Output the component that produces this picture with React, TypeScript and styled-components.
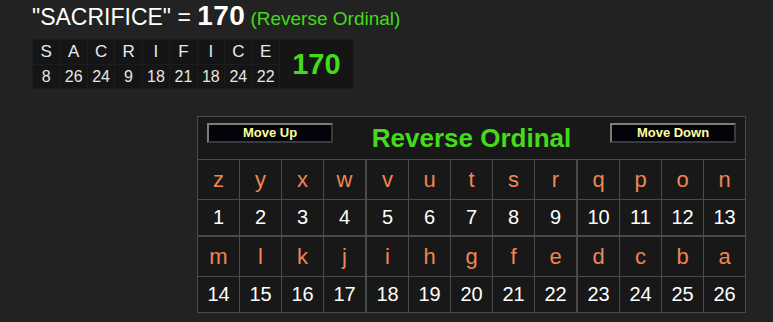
import React from "react";
import styled, { createGlobalStyle } from "styled-components";

const GlobalStyle = createGlobalStyle`
  html, body { margin: 0; padding: 0; background: #222222; }
  body { font-family: "Liberation Sans", Arial, sans-serif; }
`;

const GREEN = "#46da1c";

const Page = styled.div`
  width: 773px;
  height: 322px;
  box-sizing: border-box;
  padding-left: 32px;
  overflow: hidden;
`;

const Heading = styled.div`
  display: flex;
  align-items: baseline;
  height: 39px;
  line-height: normal;
  white-space: pre;
`;

const Word = styled.span`
  color: #ffffff;
  font-size: 23px;
`;

const HeadTotal = styled.span`
  color: #ffffff;
  font-size: 28px;
  font-weight: bold;
  letter-spacing: 0.4px;
`;

const CipherName = styled.span`
  color: ${GREEN};
  font-size: 19px;
`;

const WordGrid = styled.div`
  display: inline-grid;
  grid-template-columns: repeat(9, 26.45px) 73px;
  grid-template-rows: 24px 23px;
  gap: 1px;
  padding: 1px;
  background: #1c1c1c;
`;

const WordCell = styled.div<{ $kind: "letter" | "number" }>`
  background: #151515;
  display: flex;
  align-items: center;
  justify-content: center;
  color: ${(p) => (p.$kind === "letter" ? "#e2ecf6" : "#e6e6e6")};
  font-size: ${(p) => (p.$kind === "letter" ? "17px" : "16px")};
`;

const WordTotal = styled.div`
  grid-row: 1 / span 2;
  grid-column: 10;
  background: #151515;
  display: flex;
  align-items: center;
  justify-content: center;
  color: ${GREEN};
  font-size: 29px;
  font-weight: bold;
`;

const Chart = styled.div`
  width: 549px;
  margin: 27px 0 0 165px;
  border: 1px solid #4a4a4a;
  box-sizing: border-box;
  background: #181818;
`;

const ChartHeader = styled.div`
  height: 36px;
  display: flex;
  justify-content: space-between;
  align-items: flex-start;
  padding: 6px 9px 0 9px;
  border-bottom: 1px solid #4a4a4a;
`;

const MoveButton = styled.button`
  width: 126px;
  height: 20px;
  box-sizing: border-box;
  padding: 0;
  border-style: solid;
  border-width: 2px;
  border-color: #7c7c7c #3a3a3a #3a3a3a #7c7c7c;
  background: #03030b;
  color: #ffff99;
  font-family: "Liberation Sans", Arial, sans-serif;
  font-size: 13px;
  font-weight: bold;
  line-height: 16px;
`;

const ChartTitle = styled.div`
  align-self: center;
  margin-top: -6px;
  color: ${GREEN};
  font-size: 26px;
  font-weight: bold;
  line-height: 1.1;
`;

const Row = styled.div<{ $h: number; $bottom: number }>`
  display: flex;
  height: ${(p) => p.$h}px;
  border-bottom: ${(p) => p.$bottom}px solid #4a4a4a;
`;

const Cell = styled.div<{ $kind: "letter" | "number"; $right: number }>`
  width: 41px;
  flex: none;
  display: flex;
  align-items: center;
  justify-content: center;
  border-right: ${(p) => p.$right}px solid #4a4a4a;
  color: ${(p) => (p.$kind === "letter" ? "#ee8654" : "#ffffff")};
  font-size: ${(p) => (p.$kind === "letter" ? "22px" : "20px")};
`;

const word = "SACRIFICE".split("");
const rev = (c: string) => 27 - (c.toLowerCase().charCodeAt(0) - 96);
const alphabet = "zyxwvutsrqponmlkjihgfedcba".split("");

const rightFor = (i: number) => (i === 12 ? 0 : i === 3 || i === 8 ? 2 : 1);

export default function App() {
  const first = alphabet.slice(0, 13);
  const second = alphabet.slice(13);
  return (
    <Page>
      <GlobalStyle />
      <Heading>
        <Word>"SACRIFICE" = </Word>
        <HeadTotal>170</HeadTotal>
        <CipherName> (Reverse Ordinal)</CipherName>
      </Heading>
      <WordGrid>
        {word.map((c, i) => (
          <WordCell key={"l" + i} $kind="letter" style={{ gridRow: 1, gridColumn: i + 1 }}>
            {c}
          </WordCell>
        ))}
        {word.map((c, i) => (
          <WordCell key={"n" + i} $kind="number" style={{ gridRow: 2, gridColumn: i + 1 }}>
            {rev(c)}
          </WordCell>
        ))}
        <WordTotal>170</WordTotal>
      </WordGrid>
      <Chart>
        <ChartHeader>
          <MoveButton>Move Up</MoveButton>
          <ChartTitle>Reverse Ordinal</ChartTitle>
          <MoveButton>Move Down</MoveButton>
        </ChartHeader>
        <Row $h={39} $bottom={1}>
          {first.map((c, i) => (
            <Cell key={c} $kind="letter" $right={rightFor(i)}>{c}</Cell>
          ))}
        </Row>
        <Row $h={35} $bottom={2}>
          {first.map((c, i) => (
            <Cell key={c} $kind="number" $right={rightFor(i)}>{i + 1}</Cell>
          ))}
        </Row>
        <Row $h={39} $bottom={1}>
          {second.map((c, i) => (
            <Cell key={c} $kind="letter" $right={rightFor(i)}>{c}</Cell>
          ))}
        </Row>
        <Row $h={35} $bottom={0}>
          {second.map((c, i) => (
            <Cell key={c} $kind="number" $right={rightFor(i)}>{i + 14}</Cell>
          ))}
        </Row>
      </Chart>
    </Page>
  );
}
